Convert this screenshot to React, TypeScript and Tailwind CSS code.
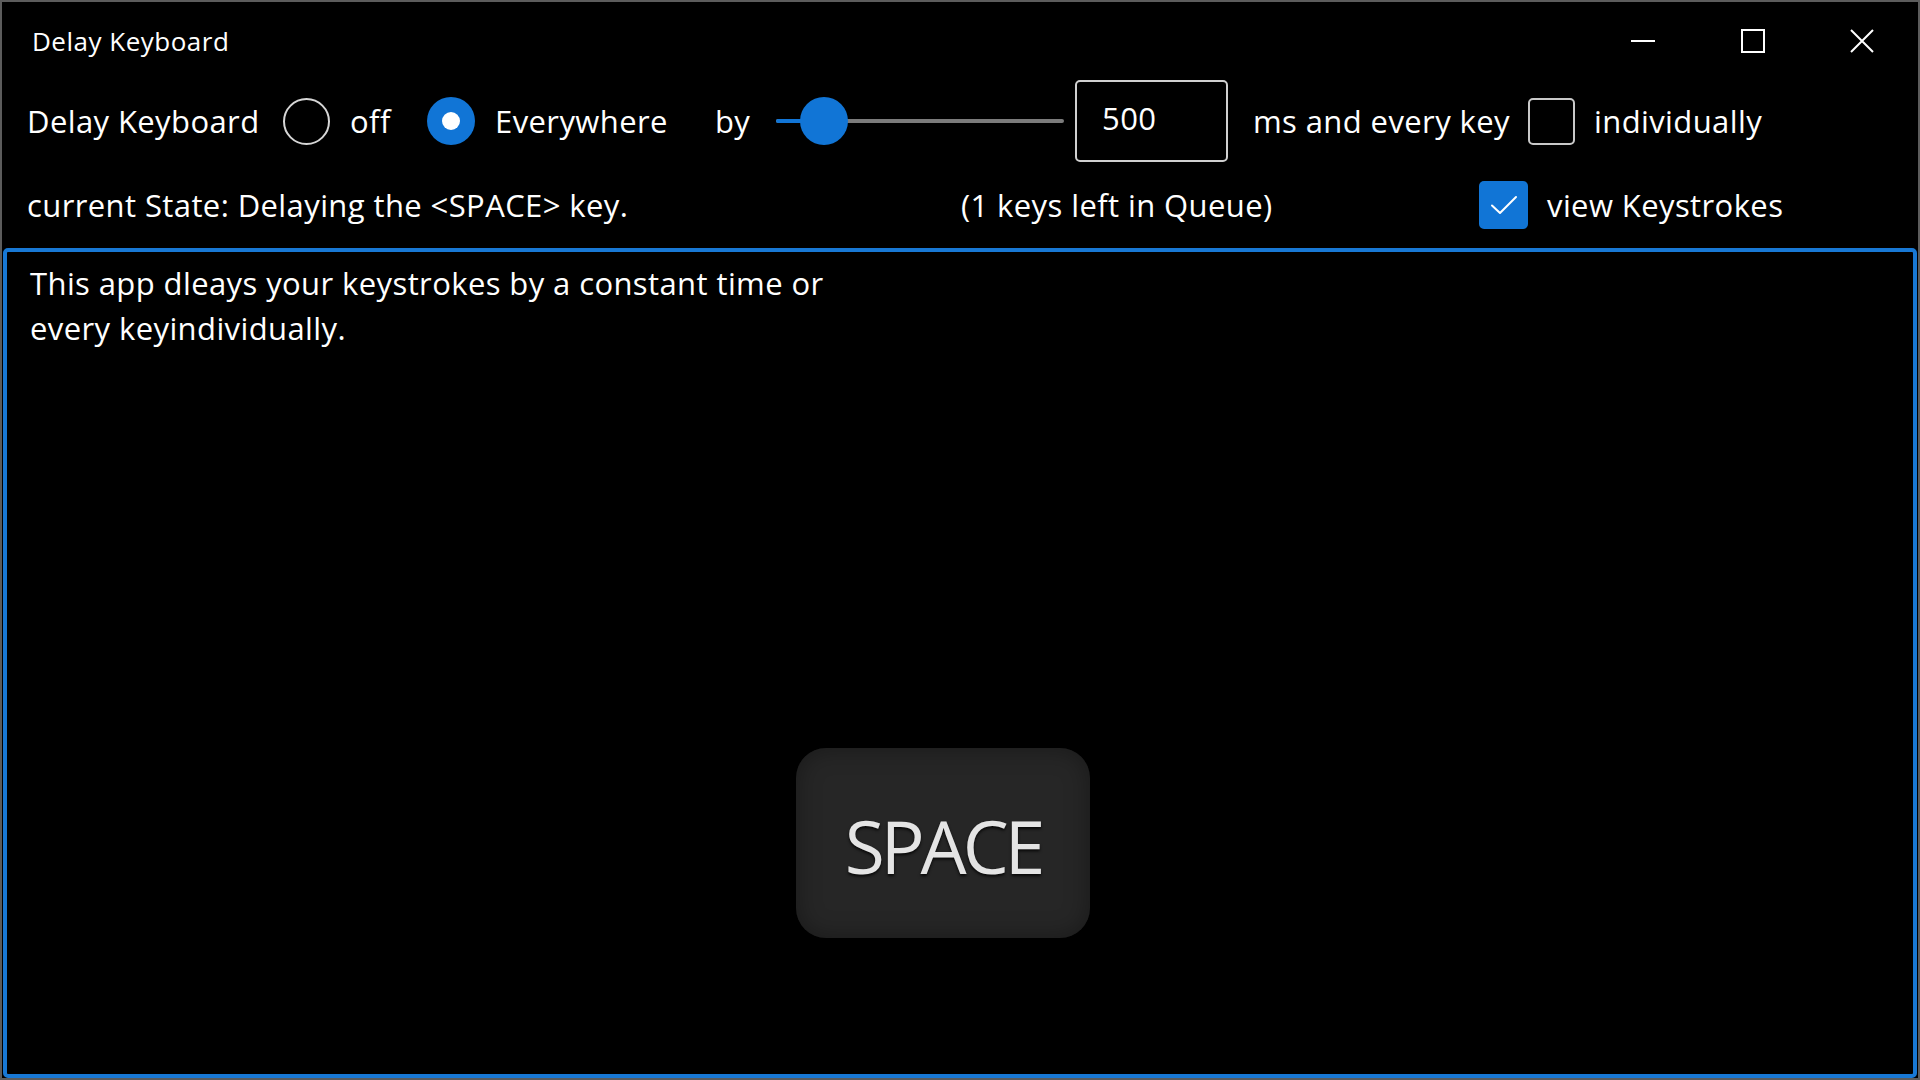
import React from "react"

const font = { fontFamily: '"Open Sans", "Noto Sans", sans-serif' }

function Radio({ checked }: { checked?: boolean }) {
  if (checked) {
    return (
      <div className="w-[48px] h-[48px] rounded-full bg-[#1175d6] flex items-center justify-center shrink-0">
        <div className="w-[18px] h-[18px] rounded-full bg-white" />
      </div>
    )
  }
  return <div className="w-[47px] h-[47px] rounded-full border-2 border-[#d6d6d6] shrink-0" />
}

function Check({ checked }: { checked?: boolean }) {
  if (checked) {
    return (
      <div className="w-[49px] h-[48px] rounded-[5px] bg-[#1175d6] flex items-center justify-center shrink-0">
        <svg width="28" height="22" viewBox="0 0 28 22" fill="none">
          <path d="M2 11.5 L10 19 L26 3" stroke="white" strokeWidth="2" strokeLinecap="round" strokeLinejoin="round" />
        </svg>
      </div>
    )
  }
  return <div className="w-[47px] h-[47px] rounded-[5px] border-2 border-[#c9c9c9] shrink-0" />
}

function Slider() {
  return (
    <div className="relative w-[288px] h-[48px] flex items-center shrink-0">
      <div className="w-full h-[4px] rounded-full bg-[#7b7b7b] flex">
        <div className="w-[40px] h-full rounded-full bg-[#1175d6]" />
      </div>
      <div className="absolute left-[24px] top-0 w-[48px] h-[48px] rounded-full bg-[#1175d6]" />
    </div>
  )
}

export default function App() {
  return (
    <div style={font} className="w-[1920px] h-[1080px] bg-black border-2 border-[#5c5c5c] flex flex-col text-white overflow-hidden">
      {/* title bar */}
      <div className="h-[78px] flex items-center shrink-0">
        <span className="pl-[30px] text-[26px] tracking-[0.5px] leading-none flex-1">Delay Keyboard</span>
        <div className="flex h-full">
          <div className="w-[110px] h-full flex items-center justify-center">
            <svg width="26" height="4" viewBox="0 0 26 4">
              <path d="M1 2 H25" stroke="white" strokeWidth="2" />
            </svg>
          </div>
          <div className="w-[110px] h-full flex items-center justify-center">
            <svg width="24" height="24" viewBox="0 0 24 24" fill="none">
              <rect x="1" y="1" width="22" height="22" stroke="white" strokeWidth="2" />
            </svg>
          </div>
          <div className="w-[110px] h-full flex items-center justify-center pr-[2px]">
            <svg width="24" height="24" viewBox="0 0 24 24" fill="none">
              <path d="M1 1 L23 23 M23 1 L1 23" stroke="white" strokeWidth="2" />
            </svg>
          </div>
        </div>
      </div>

      {/* options row */}
      <div className="h-[82px] flex items-center pl-[25px] text-[31px] tracking-[0.4px] shrink-0">
        <span className="w-[256px]">Delay Keyboard</span>
        <Radio />
        <span className="ml-[20px] w-[77px]">off</span>
        <Radio checked />
        <span className="ml-[20px] w-[220px]">Everywhere</span>
        <span className="w-[61px]">by</span>
        <Slider />
        <div className="ml-[11px] w-[153px] h-[82px] border-2 border-[#d0d0d0] rounded-[5px] pl-[25px] pb-[6px] flex items-center shrink-0">
          500
        </div>
        <span className="ml-[25px] w-[275px]">ms and every key</span>
        <Check />
        <span className="ml-[19px]">individually</span>
      </div>

      {/* state row */}
      <div className="h-[86px] flex items-center pl-[25px] text-[31px] tracking-[0.4px] shrink-0">
        <span className="w-[934px]">current State: Delaying the &lt;SPACE&gt; key.</span>
        <span className="w-[518px]">(1 keys left in Queue)</span>
        <Check checked />
        <span className="ml-[19px]">view Keystrokes</span>
      </div>

      {/* text area */}
      <div className="relative flex-1 mx-px border-4 border-[#1878d4] rounded-[5px] pl-[23px] pt-[9px] text-[31px] tracking-[0.4px] leading-[45px]">
        <p>
          This app dleays your keystrokes by a constant time or
          <br />
          every keyindividually.
        </p>
        <div className="absolute left-[789px] top-[496px] w-[294px] h-[190px] rounded-[30px] bg-[#262626] shadow-[inset_0_0_24px_rgba(0,0,0,0.35)] flex items-center justify-center">
          <span className="text-[73px] leading-none text-[#e4e4e4] tracking-[-4px] pt-[4px] [text-shadow:0_2px_3px_rgba(0,0,0,0.8)]">
            SPACE
          </span>
        </div>
      </div>
    </div>
  )
}
